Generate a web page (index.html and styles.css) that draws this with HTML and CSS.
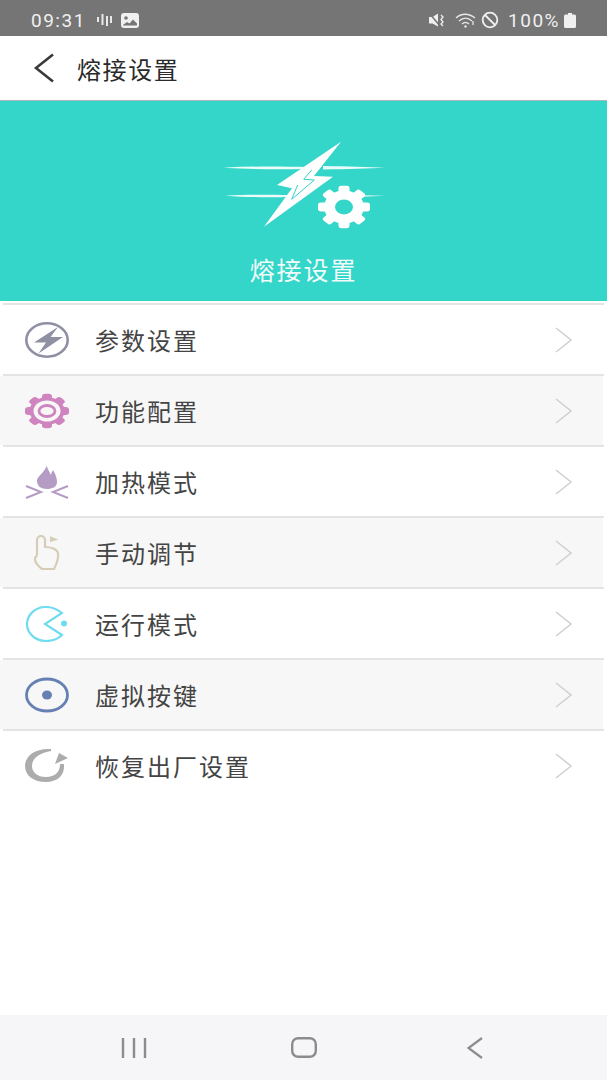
FILE: index.html
```html
<!DOCTYPE html>
<html lang="zh-CN">

<head>
  <meta charset="UTF-8">
  <meta name="viewport" content="width=device-width, initial-scale=1.0">
  <title>熔接设置</title>
  <link rel="stylesheet" href="styles.css">
</head>

<body>
  <div class="status-bar">
    <div class="status-left">
      <span class="status-time">09:31</span>
      <svg class="status-icon" width="17" height="14" viewBox="0 0 17 14"><path d="M2 4v5M6.500 1v11M11 3v10M15 3v7" stroke="#e8e8e8" stroke-width="2" fill="none"/></svg>
      <svg class="status-icon" width="18" height="15" viewBox="0 0 18 15"><rect width="18" height="15" rx="3" fill="#f0f0f0"/><circle cx="5" cy="5" r="1.800" fill="#757575"/><path d="M2 12l4-3 2.500 1.500L12 6.500l4 4V12.500H2z" fill="#757575"/></svg>
    </div>
    <div class="status-right">
      <svg class="status-mute" width="18" height="15" viewBox="0 0 18 15"><path d="M0 4h3.500L9 .5v13L3.500 10.500H0z" fill="#f0f0f0"/><path d="M1 1l10 12" stroke="#757575" stroke-width="1.500"/><path d="M12 2l2 2-2 2.500 2 2.500-2 2 2 2" stroke="#f0f0f0" stroke-width="1.300" fill="none"/></svg>
      <svg width="22" height="16" viewBox="0 0 22 16"><g stroke="#e8e8e8" stroke-width="1.300" fill="none"><path d="M1 6c5-5 13-5 19 0"/><path d="M4 9c4-3.500 9-3.500 13 0"/><path d="M7 12c2-2 5-2 7 0"/></g><circle cx="10.500" cy="14.500" r="1.200" fill="#e8e8e8"/><path d="M18 9v4" stroke="#e8e8e8" stroke-width="1.300"/></svg>
      <svg width="18" height="18" viewBox="0 0 18 18"><circle cx="9" cy="9" r="7.300" fill="none" stroke="#f0f0f0" stroke-width="1.800"/><path d="M4 4l10 10" stroke="#f0f0f0" stroke-width="1.800"/></svg>
      <span class="status-battery">100%</span>
      <svg width="12" height="15" viewBox="0 0 12 15"><path d="M4 0h4v1.500h2.500A1.500 1.500 0 0 1 12 3v10.500A1.500 1.500 0 0 1 10.500 15h-9A1.500 1.500 0 0 1 0 13.500V3a1.500 1.500 0 0 1 1.500-1.500H4z" fill="#f0f0f0"/></svg>
    </div>
  </div>

  <div class="header">
    <svg class="back-icon" width="22" height="30" viewBox="0 0 22 30"><path d="M20 1.500L3 15l17 13.500" fill="none" stroke="#3a3a3a" stroke-width="2.600"/></svg>
    <h1>熔接设置</h1>
  </div>

  <div class="hero">
    <svg class="hero-icon" width="162" height="88" viewBox="0 0 162 88">
      <path d="M0 26.700C30 25 60 25.500 84 26V28C60 28.500 30 28.500 0 26.700zM100 25C125 25.300 145 26 162 26.700C145 27.500 125 28 100 28.500zM2 54.700C25 53.200 50 53.700 66 54V56C50 56.400 25 56.400 2 54.700zM105 53.500L162 54.700L112 57z" fill="#fff" fill-opacity="0.9"/>
      <path d="M118 0.700L54 44 69 47.300 41 85.700 110 35.700 91 35z" fill="#fff"/>
      <path d="M88.700 29L80.700 38.300 91.300 39 68.700 58.300 74.700 44" fill="none" stroke="#33d6c8" stroke-width="1"/>
      <g transform="translate(121 66) scale(1 .82)">
        <circle r="20" fill="#fff"/>
        <g fill="#fff"><rect x="-5.500" y="-26" width="11" height="52" rx="3"/><rect x="-5.500" y="-26" width="11" height="52" rx="3" transform="rotate(45)"/><rect x="-5.500" y="-26" width="11" height="52" rx="3" transform="rotate(90)"/><rect x="-5.500" y="-26" width="11" height="52" rx="3" transform="rotate(135)"/></g>
        <circle r="9" fill="#33d6c8"/>
      </g>
    </svg>
    <div class="hero-title">熔接设置</div>
  </div>

  <div class="menu">
    <div class="menu-line"></div>
    <div class="menu-row">
      <svg class="menu-icon" width="44" height="36" viewBox="0 0 44 36"><ellipse cx="22" cy="18" rx="20.700" ry="16.700" fill="none" stroke="#8f90a3" stroke-width="2.600"/><path d="M33 5L9 20.500H21L13.500 31.500 38 15H25.500z" fill="#8f90a3"/></svg>
      <span class="menu-label">参数设置</span>
      <svg class="chevron" width="18" height="26" viewBox="0 0 18 26"><path d="M1 1l15 12L1 25" fill="none" stroke="#cfcfcf" stroke-width="1.500"/></svg>
    </div>
    <div class="menu-line"></div>
    <div class="menu-row alt">
      <svg class="menu-icon" width="44" height="36" viewBox="0 0 44 36"><g transform="translate(22 18) scale(1 .78)" fill="#cf84bf"><circle r="17.500"/><rect x="-5" y="-22" width="10" height="44" rx="3.500"/><rect x="-5" y="-22" width="10" height="44" rx="3.500" transform="rotate(45)"/><rect x="-5" y="-22" width="10" height="44" rx="3.500" transform="rotate(90)"/><rect x="-5" y="-22" width="10" height="44" rx="3.500" transform="rotate(135)"/></g><ellipse cx="22" cy="18" rx="13.500" ry="10.500" fill="#f7f7f7"/><ellipse cx="22" cy="18" rx="8" ry="5.500" fill="none" stroke="#cf84bf" stroke-width="2.800"/></svg>
      <span class="menu-label">功能配置</span>
      <svg class="chevron" width="18" height="26" viewBox="0 0 18 26"><path d="M1 1l15 12L1 25" fill="none" stroke="#cfcfcf" stroke-width="1.500"/></svg>
    </div>
    <div class="menu-line"></div>
    <div class="menu-row">
      <svg class="menu-icon" width="44" height="36" viewBox="0 0 44 36"><path d="M22 0C21 4 25 7 25.500 11L28 6C31 11 32 15 32 18C32 23 27 25 22 25C16 25 12 22 12 17C12 13 16 11 18 8C20 5 22 3 22 0z" fill="#b49cc4"/><path d="M1 22l15 6L1 34M43 22l-15 6 15 6" fill="none" stroke="#b49cc4" stroke-width="2"/></svg>
      <span class="menu-label">加热模式</span>
      <svg class="chevron" width="18" height="26" viewBox="0 0 18 26"><path d="M1 1l15 12L1 25" fill="none" stroke="#cfcfcf" stroke-width="1.500"/></svg>
    </div>
    <div class="menu-line"></div>
    <div class="menu-row alt">
      <svg class="menu-icon" width="44" height="36" viewBox="0 0 44 36"><path d="M12 20V5a4 4 0 0 1 8 0V12C26 12 32 14 33 18C34 24 31 30 29 34H17C13 31 10 28 10 24C10 22 11 21 12.500 20.500" fill="none" stroke="#d6cdb6" stroke-width="2.200"/><path d="M25 1.200l8.300 3.300L25 7z" fill="#d6cdb6"/></svg>
      <span class="menu-label">手动调节</span>
      <svg class="chevron" width="18" height="26" viewBox="0 0 18 26"><path d="M1 1l15 12L1 25" fill="none" stroke="#cfcfcf" stroke-width="1.500"/></svg>
    </div>
    <div class="menu-line"></div>
    <div class="menu-row">
      <svg class="menu-icon" width="44" height="36" viewBox="0 0 44 36"><path d="M37 7C32 3 27 1 21 1 10 1 2 9 2 18s8 17 19 17c6 0 12-2 16-6L20 18z" fill="none" stroke="#6fdcef" stroke-width="2.200"/><circle cx="39" cy="17.500" r="3" fill="#6fdcef"/></svg>
      <span class="menu-label">运行模式</span>
      <svg class="chevron" width="18" height="26" viewBox="0 0 18 26"><path d="M1 1l15 12L1 25" fill="none" stroke="#cfcfcf" stroke-width="1.500"/></svg>
    </div>
    <div class="menu-line"></div>
    <div class="menu-row alt">
      <svg class="menu-icon" width="44" height="36" viewBox="0 0 44 36"><ellipse cx="22" cy="18" rx="20.500" ry="16" fill="none" stroke="#6680b4" stroke-width="2.800"/><ellipse cx="22" cy="18" rx="5" ry="4.500" fill="#6680b4"/></svg>
      <span class="menu-label">虚拟按键</span>
      <svg class="chevron" width="18" height="26" viewBox="0 0 18 26"><path d="M1 1l15 12L1 25" fill="none" stroke="#cfcfcf" stroke-width="1.500"/></svg>
    </div>
    <div class="menu-line"></div>
    <div class="menu-row">
      <svg class="menu-icon" width="44" height="36" viewBox="0 0 44 36"><path d="M26 1C10 0 0 8 0 18C0 28 9 34 21 34C33 34 40 27 39 16H35C35 24 30 29 21 29C12 29 7 24 7 18C7 10 15 5 26 3z" fill="#acacac"/><path d="M34 5l9 5-13 6z" fill="#acacac"/></svg>
      <span class="menu-label">恢复出厂设置</span>
      <svg class="chevron" width="18" height="26" viewBox="0 0 18 26"><path d="M1 1l15 12L1 25" fill="none" stroke="#cfcfcf" stroke-width="1.500"/></svg>
    </div>
  </div>

  <div class="nav-bar">
    <svg width="26" height="20" viewBox="0 0 26 20"><path d="M2 0v20M13 0v20M24 0v20" stroke="#8c8c8c" stroke-width="2.400"/></svg>
    <svg class="nav-home" width="26" height="21" viewBox="0 0 26 21"><rect x="1.200" y="1.200" width="23.600" height="18.600" rx="6" fill="none" stroke="#8c8c8c" stroke-width="2.400"/></svg>
    <svg width="16" height="22" viewBox="0 0 16 22"><path d="M15 1L1.500 11 15 21" fill="none" stroke="#8c8c8c" stroke-width="2.200"/></svg>
  </div>
</body>

</html>
```

FILE: styles.css
```css
* {
  margin: 0;
  padding: 0;
  box-sizing: border-box;
}

body {
  font-family: 'Noto Sans CJK SC', 'Noto Sans', sans-serif;
  height: 1080px;
  background-color: #fff;
  color: #333;
  display: flex;
  flex-direction: column;
  overflow: hidden;
}

.status-bar {
  height: 36px;
  flex-shrink: 0;
  background-color: #757575;
  color: #f0f0f0;
  padding: 4px 31px 0 31px;
  display: flex;
  justify-content: space-between;
  align-items: center;
  font-family: 'Roboto', sans-serif;
  font-size: 19px;
  letter-spacing: 1.5px;
}

.status-left,
.status-right {
  display: flex;
  align-items: center;
}

.status-time {
  margin-right: 10px;
}

.status-icon {
  margin-right: 8px;
}

.status-right {
  gap: 4px;
}

.status-mute {
  margin-right: 4px;
}

.status-battery {
  margin-left: 5px;
}

.header {
  height: 65px;
  flex-shrink: 0;
  background-color: #fff;
  border-bottom: 1px solid #a9b8b6;
  padding-left: 33px;
  display: flex;
  align-items: center;
}

.header h1 {
  font-size: 24px;
  font-weight: 400;
  letter-spacing: 1.6px;
  color: #2a2a2a;
  margin: 0 0 0 22px;
}

.hero {
  height: 200px;
  flex-shrink: 0;
  background-color: #33d6c8;
  padding-top: 40px;
  display: flex;
  flex-direction: column;
  align-items: center;
}

.hero-title {
  margin-top: 25px;
  font-size: 25px;
  line-height: 30px;
  letter-spacing: 1.9px;
  color: #f2fbfa;
}

.menu {
  padding-top: 2px;
  flex: 1;
}

.menu-line {
  height: 2px;
  margin: 0 3px;
  background-color: #e4e4e4;
}

.menu-row {
  height: 69px;
  display: flex;
  align-items: center;
  padding: 0 30px 0 25px;
  margin-right: 4px;
}

.menu-row.alt {
  background-color: #f7f7f7;
}

.menu-label {
  flex: 1;
  font-size: 24px;
  letter-spacing: 2px;
  color: #444;
  margin: 0 0 1px 26px;
}

.nav-bar {
  height: 65px;
  flex-shrink: 0;
  background-color: #f6f6f8;
  padding: 0 124px 0 121px;
  display: flex;
  justify-content: space-between;
  align-items: center;
}

.nav-home {
  margin-right: 6px;
}
```
